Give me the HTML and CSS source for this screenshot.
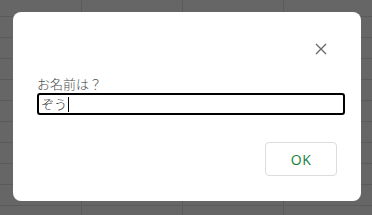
FILE: index.html
```html
<!DOCTYPE html>
<html lang="ja">
<head>
<meta charset="utf-8">
<link rel="stylesheet" href="styles.css">
</head>
<body>
<div class="dialog">
  <div class="dialog-head">
    <button class="close" aria-label="閉じる">
      <svg width="12" height="12" viewBox="0 0 12 12"><path d="M1 1 L11 11 M11 1 L1 11" stroke="#6b6b6b" stroke-width="1.4" fill="none"/></svg>
    </button>
  </div>
  <label class="label">お名前は？</label>
  <div class="input"><span class="value">ぞう</span><span class="caret"></span></div>
  <div class="actions">
    <button class="ok">OK</button>
  </div>
</div>
</body>
</html>
```
FILE: styles.css
```css
html, body {
  margin: 0;
  padding: 0;
}
body {
  width: 372px;
  height: 215px;
  overflow: hidden;
  background-color: #666666;
  background-image:
    linear-gradient(to right, #5b5b5b 1px, transparent 1px),
    linear-gradient(to bottom, #5b5b5b 1px, transparent 1px);
  background-size: 101px 21px, 101px 21px;
  background-position: 81px 0, 0 16px;
  padding: 12px 11px 14px 13px;
  box-sizing: border-box;
  font-family: "Noto Sans CJK JP", "Noto Sans", sans-serif;
}
.dialog {
  width: 348px;
  height: 189px;
  box-sizing: border-box;
  background: #ffffff;
  border-radius: 8px;
  padding: 13px 16px 25px 24px;
  display: flex;
  flex-direction: column;
}
.dialog-head {
  display: flex;
  justify-content: flex-end;
  padding-right: 12px;
  padding-top: 12px;
}
.close {
  width: 24px;
  height: 24px;
  border: 0;
  padding: 0;
  background: transparent;
  display: flex;
  align-items: center;
  justify-content: center;
}
.label {
  margin-top: 14px;
  font-size: 13px;
  line-height: 17px;
  color: #4a4a4a;
  font-weight: 300;
}
.input {
  margin-top: 1px;
  width: 308px;
  height: 22px;
  box-sizing: border-box;
  border: 2px solid #000000;
  border-radius: 3px;
  display: flex;
  align-items: center;
  padding-left: 2px;
  font-size: 13px;
  color: #222222;
}
.value {
  line-height: 16px;
  font-weight: 300;
}
.caret {
  width: 1px;
  height: 15px;
  background: #000;
  margin-left: 1px;
}
.actions {
  margin-top: auto;
  display: flex;
  justify-content: flex-end;
  padding-right: 8px;
}
.ok {
  width: 72px;
  height: 34px;
  box-sizing: border-box;
  border: 1px solid #dadce0;
  border-radius: 4px;
  background: #ffffff;
  color: #188038;
  font-family: "Open Sans", Roboto, sans-serif;
  font-weight: 500;
  font-size: 14px;
  letter-spacing: 0.6px;
  padding: 0;
}
```
